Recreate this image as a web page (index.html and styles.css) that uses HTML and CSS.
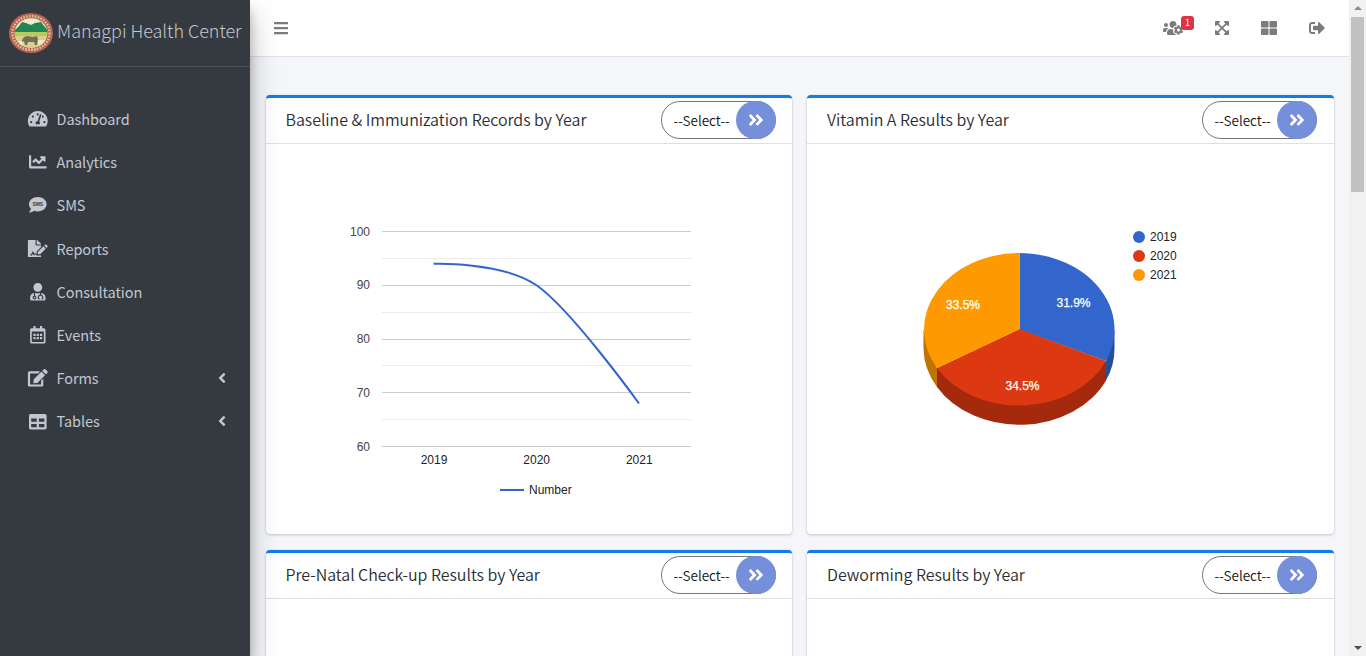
FILE: index.html
```html
<!DOCTYPE html>
<html lang="en">
<head>
<meta charset="utf-8">
<title>Managpi Health Center</title>
<link rel="stylesheet" href="styles.css">
</head>
<body>
<svg class="defs" width="0" height="0">
  <symbol id="i-double" viewBox="0 0 448 512"><path d="M224.3 273l-136 136c-9.4 9.4-24.6 9.4-33.9 0l-22.6-22.6c-9.4-9.4-9.4-24.6 0-33.9l96.4-96.4-96.4-96.4c-9.4-9.4-9.4-24.6 0-33.9L54.3 103c9.4-9.4 24.6-9.4 33.9 0l136 136c9.5 9.4 9.5 24.6.1 34zm192-34l-136-136c-9.4-9.4-24.6-9.4-33.9 0l-22.6 22.6c-9.4 9.4-9.4 24.6 0 33.9l96.4 96.4-96.4 96.4c-9.4 9.4-9.4 24.6 0 33.9l22.6 22.6c9.4 9.4 24.6 9.4 33.9 0l136-136c9.4-9.2 9.4-24.4 0-33.8z"/></symbol>
  <symbol id="i-left" viewBox="0 0 256 512"><path d="M31.7 239l136-136c9.4-9.4 24.6-9.4 33.9 0l22.6 22.6c9.4 9.4 9.4 24.6 0 33.9L127.9 256l96.4 96.4c9.4 9.4 9.4 24.6 0 33.9L201.7 409c-9.4 9.4-24.6 9.4-33.9 0l-136-136c-9.5-9.4-9.5-24.6-.1-34z"/></symbol>
</svg>
<div class="app">
  <aside class="sidebar">
    <div class="brand">
      <svg class="seal" viewBox="0 0 44 40">
        <defs><clipPath id="inner"><ellipse cx="22" cy="20" rx="16.3" ry="14.8"/></clipPath></defs>
        <ellipse cx="22" cy="20" rx="22" ry="20" fill="#b9634f"/>
        <ellipse cx="22" cy="20" rx="18.6" ry="16.9" fill="none" stroke="#dcc0a4" stroke-width="2.4" stroke-dasharray="1.6 1.3"/>
        <g clip-path="url(#inner)">
          <path fill="#f0ecc9" d="M0 0h44v40H0z"/>
          <path fill="#218653" d="M4 19l6-6 3-4 4 1 5 2 4-2 6-1 3 4 5 5v2H4z"/>
          <path fill="#b5cb5c" d="M4 19h36v4H4z"/>
          <path fill="#d9cf8e" d="M4 23h36v14H4z"/>
          <path fill="#efe9c0" d="M4 28h10v8H4zM29 27h10v5H29z"/>
          <path fill="#766e54" d="M13 27l2-3 3-1 6 1 4-1 1 3-1 6h-2l-1-3h-6l-1 3h-2l-1-4-2 1z"/>
        </g>
        <path d="M16 36.500h12" stroke="#dbb79f" stroke-width="2" stroke-dasharray="2 1"/>
      </svg>
      <span class="brand-name">Managpi Health Center</span>
    </div>
    <nav class="menu">
      <a class="item"><svg class="ico" viewBox="0 0 576 512"><path d="M288 32C128.94 32 0 160.94 0 320c0 52.8 14.25 102.26 39.06 144.8 5.61 9.62 16.3 15.2 27.44 15.2h443c11.14 0 21.83-5.58 27.44-15.2C561.75 422.26 576 372.8 576 320c0-159.06-128.94-288-288-288zm0 64c14.71 0 26.58 10.13 30.32 23.65-1.11 2.26-2.64 4.23-3.45 6.67l-9.22 27.67c-5.13 3.49-10.97 6.01-17.64 6.01-17.67 0-32-14.33-32-32S270.33 96 288 96zM96 384c-17.67 0-32-14.33-32-32s14.33-32 32-32 32 14.33 32 32-14.33 32-32 32zm48-160c-17.67 0-32-14.33-32-32s14.33-32 32-32 32 14.33 32 32-14.33 32-32 32zm246.77-72.41l-61.33 184C343.13 347.33 352 364.54 352 384c0 11.72-3.38 22.55-8.88 32H232.88c-5.5-9.45-8.88-20.28-8.88-32 0-33.94 26.5-61.43 59.9-63.59l61.34-184.01c4.17-12.56 17.73-19.45 30.36-15.17 12.57 4.19 19.35 17.79 15.17 30.36zm14.66 57.2l15.52-46.55c3.47-1.29 7.13-2.23 11.05-2.23 17.67 0 32 14.33 32 32s-14.33 32-32 32c-11.38-.01-20.89-6.28-26.57-15.22zM480 384c-17.67 0-32-14.33-32-32s14.33-32 32-32 32 14.33 32 32-14.33 32-32 32z"/></svg><span>Dashboard</span></a>
      <a class="item"><svg class="ico" viewBox="0 0 512 512"><path d="M496 384H64V80c0-8.84-7.16-16-16-16H16C7.16 64 0 71.16 0 80v336c0 17.67 14.33 32 32 32h464c8.84 0 16-7.16 16-16v-32c0-8.84-7.16-16-16-16zM464 96H345.94c-21.38 0-32.09 25.85-16.97 40.97l32.4 32.4L288 242.75l-73.37-73.37c-12.5-12.5-32.76-12.5-45.25 0l-68.69 68.69c-6.25 6.25-6.25 16.38 0 22.63l22.62 22.62c6.25 6.25 16.38 6.25 22.63 0L192 237.25l73.37 73.37c12.5 12.5 32.76 12.5 45.25 0l96-96 32.4 32.4c15.12 15.12 40.97 4.41 40.97-16.97V112c.01-8.84-7.15-16-15.99-16z"/></svg><span>Analytics</span></a>
      <a class="item"><svg class="ico" viewBox="0 0 512 512"><path d="M256 32C114.6 32 0 125.1 0 240c0 49.6 21.4 95 57 130.7C44.5 421.1 2.7 466 2.2 466.5c-2.2 2.3-2.8 5.7-1.5 8.7 1.3 3 4.1 4.8 7.3 4.8 66.3 0 116-31.8 140.6-51.4 32.7 12.3 69 19.4 107.4 19.4 141.4 0 256-93.1 256-208S397.4 32 256 32z"/><text class="bubble" x="256" y="292" text-anchor="middle" textLength="310" lengthAdjust="spacingAndGlyphs">SMS</text></svg><span>SMS</span></a>
      <a class="item"><svg class="ico" viewBox="0 0 576 512"><path d="M218.17 424.14c-2.95-5.92-8.09-6.52-10.17-6.52s-7.22.59-10.02 6.19l-7.67 15.34c-6.37 12.78-25.03 11.37-29.48-2.09L144 386.59l-10.61 31.88c-5.89 17.66-22.38 29.53-41 29.53H80c-8.84 0-16-7.16-16-16s7.16-16 16-16h12.39c4.83 0 9.11-3.08 10.64-7.66l18.19-54.64c3.3-9.81 12.44-16.41 22.78-16.41s19.48 6.59 22.77 16.41l13.88 41.64c19.75-16.19 54.06-9.7 66 14.16 1.89 3.78 5.49 5.95 9.36 6.26v-82.12l128-127.09V160H248c-13.2 0-24-10.8-24-24V0H24C10.7 0 0 10.7 0 24v464c0 13.3 10.7 24 24 24h336c13.3 0 24-10.7 24-24v-40l-128-.11c-16.12-.31-30.58-9.28-37.83-23.75zM384 121.9c0-6.3-2.5-12.4-7-16.9L279.1 7c-4.5-4.5-10.6-7-17-7H256v128h128v-6.1zm-96 225.06V416h68.99l161.68-162.78-67.88-67.88L288 346.96zm280.54-179.63l-31.87-31.87c-9.94-9.94-26.07-9.94-36.01 0l-27.25 27.25 67.88 67.88 27.25-27.25c9.95-9.94 9.95-26.07 0-36.01z"/></svg><span>Reports</span></a>
      <a class="item"><svg class="ico" viewBox="0 0 448 512"><path d="M224 256c70.7 0 128-57.3 128-128S294.7 0 224 0 96 57.3 96 128s57.3 128 128 128zM104 424c0 13.3 10.7 24 24 24s24-10.7 24-24-10.7-24-24-24-24 10.7-24 24zm216-135.4v49c36.5 7.4 64 39.8 64 78.4v41.7c0 7.6-5.4 14.2-12.9 15.7l-32.2 6.4c-4.3.9-8.5-1.9-9.4-6.3l-3.1-15.7c-.9-4.3 1.9-8.6 6.3-9.4l19.3-3.9V416c0-62.8-96-65.1-96 1.9v26.7l19.3 3.9c4.3.9 7.1 5.1 6.3 9.4l-3.1 15.7c-.9 4.3-5.1 7.1-9.4 6.3l-31.2-4.2c-7.9-1.1-13.8-7.8-13.8-15.9V416c0-38.6 27.5-70.9 64-78.4v-45.2c-2.2.7-4.4 1.1-6.6 1.9-18 6.3-37.3 9.8-57.4 9.8s-39.4-3.5-57.4-9.8c-7.4-2.6-14.9-4.2-22.6-5.2v81.6c23.1 6.9 40 28.1 40 53.4 0 30.9-25.1 56-56 56s-56-25.1-56-56c0-25.3 16.9-46.5 40-53.4v-80.4C48.5 301 0 355.8 0 422.4v44.8C0 491.9 20.1 512 44.8 512h358.4c24.7 0 44.8-20.1 44.8-44.8v-44.8c0-72-56.8-130.3-128-133.8z"/></svg><span>Consultation</span></a>
      <a class="item"><svg class="ico" viewBox="0 0 448 512"><path fill-rule="evenodd" d="M448 112v352c0 26.5-21.5 48-48 48H48c-26.5 0-48-21.5-48-48V112c0-26.5 21.5-48 48-48h48V12c0-6.6 5.4-12 12-12h40c6.6 0 12 5.4 12 12v52h128V12c0-6.6 5.4-12 12-12h40c6.6 0 12 5.4 12 12v52h48c26.5 0 48 21.5 48 48zm-48 346V160H48v298c0 3.3 2.7 6 6 6h340c3.3 0 6-2.7 6-6z"/><path d="M96 224h64v64H96zm96 0h64v64h-64zm96 0h64v64h-64zM96 320h64v64H96zm96 0h64v64h-64zm96 0h64v64h-64z"/></svg><span>Events</span></a>
      <a class="item"><svg class="ico" viewBox="0 0 576 512"><path d="M402.6 83.2l90.2 90.2c3.8 3.8 3.8 10 0 13.8L274.4 405.6l-92.8 10.3c-12.4 1.4-22.9-9.1-21.5-21.5l10.3-92.8L388.8 83.2c3.8-3.8 10-3.8 13.8 0zm162-22.9l-48.8-48.8c-15.2-15.2-39.9-15.2-55.2 0l-35.4 35.4c-3.8 3.8-3.8 10 0 13.8l90.2 90.2c3.8 3.8 10 3.8 13.8 0l35.4-35.4c15.2-15.3 15.2-40 0-55.2zM384 346.2V448H64V128h229.8c3.2 0 6.2-1.3 8.5-3.5l40-40c7.6-7.6 2.2-20.5-8.5-20.5H48C21.5 64 0 85.5 0 112v352c0 26.5 21.5 48 48 48h352c26.5 0 48-21.5 48-48V306.2c0-10.7-12.9-16-20.5-8.5l-40 40c-2.2 2.3-3.5 5.3-3.5 8.5z"/></svg><span>Forms</span><svg class="arrow"><use href="#i-left"/></svg></a>
      <a class="item"><svg class="ico" viewBox="0 0 512 512"><path d="M464 32H48C21.49 32 0 53.49 0 80v352c0 26.51 21.49 48 48 48h416c26.51 0 48-21.49 48-48V80c0-26.51-21.49-48-48-48zM224 416H64v-96h160v96zm0-160H64v-96h160v96zm224 160H288v-96h160v96zm0-160H288v-96h160v96z"/></svg><span>Tables</span><svg class="arrow"><use href="#i-left"/></svg></a>
    </nav>
  </aside>
  <div class="page">
    <header class="topbar">
      <svg class="bars" viewBox="0 0 448 512"><path d="M16 60h416q16 0 16 16v40q0 16-16 16H16q-16 0-16-16V76q0-16 16-16zm0 160h416q16 0 16 16v40q0 16-16 16H16q-16 0-16-16v-40q0-16 16-16zm0 160h416q16 0 16 16v40q0 16-16 16H16q-16 0-16-16v-40q0-16 16-16z"/></svg>
      <div class="tools">
        <div class="users">
          <svg width="20" height="16" viewBox="0 0 640 512"><path d="M610.5 341.3c2.6-14.1 2.6-28.5 0-42.6l25.8-14.9c3-1.7 4.3-5.2 3.3-8.5-6.7-21.6-18.2-41.2-33.2-57.4-2.3-2.5-6-3.1-9-1.4l-25.8 14.9c-10.9-9.3-23.4-16.5-36.9-21.3v-29.8c0-3.4-2.4-6.4-5.7-7.1-22.3-5-45-4.8-66.2 0-3.3.7-5.7 3.7-5.7 7.1v29.8c-13.5 4.8-26 12-36.9 21.3l-25.8-14.9c-2.9-1.7-6.7-1.1-9 1.4-15 16.2-26.5 35.8-33.2 57.4-1 3.3.4 6.8 3.3 8.5l25.8 14.9c-2.6 14.1-2.6 28.5 0 42.6l-25.8 14.9c-3 1.7-4.3 5.2-3.3 8.5 6.7 21.6 18.2 41.1 33.2 57.4 2.3 2.5 6 3.1 9 1.4l25.8-14.9c10.9 9.3 23.4 16.5 36.9 21.3v29.8c0 3.4 2.4 6.4 5.7 7.1 22.3 5 45 4.8 66.2 0 3.3-.7 5.7-3.7 5.7-7.1v-29.8c13.5-4.8 26-12 36.9-21.3l25.8 14.9c2.9 1.7 6.7 1.1 9-1.4 15-16.2 26.5-35.8 33.2-57.4 1-3.3-.4-6.8-3.3-8.5l-25.8-14.9zM496 368.5c-26.8 0-48.5-21.8-48.5-48.5s21.8-48.5 48.5-48.5 48.5 21.8 48.5 48.5-21.7 48.5-48.5 48.5zM96 224c35.3 0 64-28.7 64-64s-28.7-64-64-64-64 28.7-64 64 28.7 64 64 64zm224 32c1.9 0 3.7-.5 5.6-.6 8.3-21.7 20.5-42.1 36.3-59.2 7.4-8 17.9-12.6 28.9-12.6 6.9 0 13.7 1.8 19.6 5.3l7.9 4.6c.8-.5 1.6-.9 2.4-1.4 7-14.6 11.2-30.8 11.2-48 0-61.9-50.1-112-112-112S208 82.1 208 144c0 61.9 50.1 112 112 112zm105.2 194.5c-2.3-1.2-4.6-2.6-6.8-3.9-8.2 4.8-15.3 9.8-27.5 9.8-10.9 0-21.4-4.6-28.9-12.6-18.3-19.8-32.3-43.9-40.2-69.6-10.7-34.5 24.9-49.7 25.8-50.3-.1-2.6-.1-5.2 0-7.8l-7.9-4.6c-3.8-2.2-7-5-9.8-8.1-3.3.2-6.5.6-9.8.6-24.6 0-47.6-6-68.5-16h-8.3C179.6 288 128 339.6 128 403.2V432c0 26.5 21.5 48 48 48h255.4c-3.7-6-6.2-12.8-6.2-20.3v-9.2zM173.1 274.6C161.5 263.1 145.6 256 128 256H64c-35.3 0-64 28.7-64 64v32c0 17.7 14.3 32 32 32h65.9c6.3-47.4 34.9-87.3 75.2-109.4z"/></svg>
          <span class="badge">1</span>
        </div>
        <svg width="14" height="16" viewBox="0 0 448 512"><path d="M448 344v112a23.94 23.94 0 0 1-24 24H312c-21.39 0-32.09-25.9-17-41l36.2-36.2L224 295.6 116.77 402.9 153 439c15.09 15.1 4.39 41-17 41H24a23.94 23.94 0 0 1-24-24V344c0-21.4 25.89-32.1 41-17l36.19 36.2L184.46 256 77.18 148.7 41 185c-15.1 15.1-41 4.4-41-17V56a23.94 23.94 0 0 1 24-24h112c21.39 0 32.09 25.9 17 41l-36.2 36.2L224 216.4l107.23-107.3L295 73c-15.09-15.1-4.39-41 17-41h112a23.94 23.94 0 0 1 24 24v112c0 21.4-25.89 32.1-41 17l-36.19-36.2L263.54 256l107.28 107.3L407 327.1c15.1-15.2 41-4.5 41 16.9z"/></svg>
        <svg width="16" height="16" viewBox="0 0 512 512"><rect y="32" width="240" height="208" rx="24"/><rect x="272" y="32" width="240" height="208" rx="24"/><rect y="272" width="240" height="208" rx="24"/><rect x="272" y="272" width="240" height="208" rx="24"/></svg>
        <svg width="16" height="16" viewBox="0 0 512 512"><path d="M497 273L329 441c-15 15-41 4.5-41-17v-96H152c-13.3 0-24-10.7-24-24v-96c0-13.3 10.7-24 24-24h136V88c0-21.4 25.9-32 41-17l168 168c9.3 9.4 9.3 24.6 0 34zM192 436v-40c0-6.6-5.4-12-12-12H96c-17.7 0-32-14.3-32-32V160c0-17.7 14.3-32 32-32h84c6.6 0 12-5.4 12-12V76c0-6.6-5.4-12-12-12H96c-53 0-96 43-96 96v192c0 53 43 96 96 96h84c6.6 0 12-5.4 12-12z"/></svg>
      </div>
    </header>
    <main class="grid">
      <section class="card">
        <div class="card-head"><h3>Baseline &amp; Immunization Records by Year</h3><div class="picker"><span>--Select--</span><b class="go"><svg><use href="#i-double"/></svg></b></div></div>
        <svg class="chart" width="526" height="391" viewBox="266 144 526 391">
          <g class="major"><path d="M382 231.500h309M382 285.500h309M382 339.500h309M382 392.500h309M382 446.500h309"/></g>
          <g class="minor"><path d="M382 258.500h309M382 312.500h309M382 365.500h309M382 419.500h309"/></g>
          <path class="line" d="M433.500 263.800C433.500 263.800 502.200 261.600 536.500 285.300C570.800 308.900 639 403.500 639 403.500"/>
          <g class="ylab" text-anchor="end"><text x="370" y="236">100</text><text x="370" y="289">90</text><text x="370" y="343">80</text><text x="370" y="397">70</text><text x="370" y="451">60</text></g>
          <g class="xlab" text-anchor="middle"><text x="434" y="464">2019</text><text x="536.700" y="464">2020</text><text x="639.300" y="464">2021</text></g>
          <path class="line" d="M500 490h24"/>
          <text class="xlab" x="529" y="494">Number</text>
        </svg>
      </section>
      <section class="card">
        <div class="card-head"><h3>Vitamin A Results by Year</h3><div class="picker"><span>--Select--</span><b class="go"><svg><use href="#i-double"/></svg></b></div></div>
        <svg class="chart" width="527" height="391" viewBox="807 144 527 391">
          <path fill="#264d99" d="M1114.500 329.500v19A95.500 76.500 0 0 1 1106 380.500v-19z"/>
          <path fill="#bf7300" d="M923.500 329.500v19A95.500 76.500 0 0 0 937 387v-19z"/>
          <path fill="#a52a0d" d="M937 368v19A95.500 76.500 0 0 0 1106 380.500v-19z"/>
          <path fill="#3366cc" d="M1019.500 329.500V253A95.500 76.500 0 0 1 1106 361z"/>
          <path fill="#dc3912" d="M1019.500 329L1106 361A95.500 76.500 0 0 1 937 368z"/>
          <path fill="#ff9900" d="M1019.500 329L937 368A95.500 76.500 0 0 1 1019.500 253z"/>
          <g class="pct" text-anchor="middle"><text x="1073.500" y="307">31.9%</text><text x="1022.500" y="390">34.5%</text><text x="963" y="309">33.5%</text></g>
          <circle cx="1139" cy="237" r="6" fill="#3366cc"/><circle cx="1139" cy="256" r="6" fill="#dc3912"/><circle cx="1139" cy="275" r="6" fill="#ff9900"/>
          <g class="xlab"><text x="1150" y="241">2019</text><text x="1150" y="260">2020</text><text x="1150" y="279">2021</text></g>
        </svg>
      </section>
      <section class="card cut">
        <div class="card-head"><h3>Pre-Natal Check-up Results by Year</h3><div class="picker"><span>--Select--</span><b class="go"><svg><use href="#i-double"/></svg></b></div></div>
      </section>
      <section class="card cut">
        <div class="card-head"><h3>Deworming Results by Year</h3><div class="picker"><span>--Select--</span><b class="go"><svg><use href="#i-double"/></svg></b></div></div>
      </section>
    </main>
  </div>
  <div class="scroll">
    <i class="up"></i><i class="thumb"></i><i class="down"></i>
  </div>
</div>
</body>
</html>
```
FILE: styles.css
```css
* { box-sizing: border-box; }
body {
  margin: 0;
  height: 656px;
  overflow: hidden;
  font-family: "Noto Sans CJK SC", sans-serif;
  font-size: 14.5px;
  color: #212529;
}
svg { fill: currentColor; flex: none; }
.defs { display: block; width: 0; height: 0; }
.app { display: flex; height: 656px; background: #f4f6f9; }

.sidebar {
  width: 250px;
  flex: none;
  height: 656px;
  background: #343a40;
  color: #c2c7d0;
  position: relative;
  z-index: 2;
  box-shadow: 0 14px 28px rgba(0,0,0,.25), 0 10px 10px rgba(0,0,0,.22);
}
.brand {
  height: 67px;
  border-bottom: 1px solid #4b545c;
  display: flex;
  align-items: center;
  padding-left: 9px;
  gap: 4px;
}
.seal { width: 44px; height: 40px; }
.brand-name { font-size: 18px; font-weight: 300; letter-spacing: -0.04px; white-space: nowrap; line-height: 30px; padding-bottom: 7px; }
.menu { padding-top: 31px; display: flex; flex-direction: column; }
.item { height: 43.2px; display: flex; align-items: center; padding: 0 24px 0 25px; }
.item:nth-child(n+4) { padding-top: 1px; }
.item span { line-height: 24px; padding-bottom: 2px; letter-spacing: -0.1px; font-weight: 400; }
.ico { width: 25.6px; height: 17.6px; margin-right: 6px; margin-top: -2px; padding: 0 2.4px; }
.bubble { font: bold 160px "Liberation Sans", sans-serif; fill: #343a40; }
.arrow { width: 8px; height: 16px; margin-left: auto; margin-top: -2px; }

.page { flex: 1; min-width: 0; }
.topbar {
  height: 57px;
  background: #fff;
  border-bottom: 1px solid #dee2e6;
  display: flex;
  justify-content: space-between;
  align-items: center;
  padding: 0 24px;
  color: #7b7b7b;
}
.bars { width: 14px; height: 16px; }
.tools { display: flex; align-items: center; }
.tools > svg { margin-left: 32px; }
.users { position: relative; width: 20px; height: 16px; }
.users svg { display: block; }
.badge {
  position: absolute;
  left: 18px;
  top: -4px;
  width: 13px;
  height: 14px;
  border-radius: 3px;
  background: #dc3545;
  color: #fff;
  font-size: 9px;
  line-height: 13px;
  text-align: center;
}

.grid {
  display: grid;
  grid-template-columns: 526px 527px;
  grid-template-rows: 439px 106px;
  column-gap: 15px;
  row-gap: 16px;
  padding: 38px 0 0 16px;
}
.card {
  background: #fff;
  border-top: 3px solid #147bec;
  border-radius: 4px;
  box-shadow: 0 0 1px rgba(0,0,0,.125), 0 1px 3px rgba(0,0,0,.2);
}
.cut { border-bottom-left-radius: 0; border-bottom-right-radius: 0; }
.card-head {
  height: 46px;
  border-bottom: 1px solid #dfdfdf;
  display: flex;
  justify-content: space-between;
  align-items: flex-start;
  padding: 3px 16px 0 19.5px;
}
.card:nth-child(even) .card-head { padding-left: 20px; padding-right: 17px; }
.card-head h3 { margin: 6px 0 0; font-size: 16px; font-weight: 350; line-height: 24px; white-space: nowrap; letter-spacing: -0.04px; color: #2a2e32; }
.picker {
  width: 115.5px;
  height: 38px;
  border: 1px solid #777;
  border-radius: 19px;
  display: flex;
  align-items: center;
  justify-content: space-between;
  padding-left: 12px;
  color: #111;
}
.picker span { font-size: 13.5px; font-weight: 350; white-space: nowrap; line-height: 20px; }
.go {
  width: 40px;
  height: 38px;
  margin-right: -1px;
  border-radius: 20px;
  background: #768fdb;
  color: #fff;
  display: flex;
  align-items: center;
  justify-content: center;
}
.go svg { width: 16px; height: 18px; margin-left: -1px; }
.chart { display: block; font: 12px "Liberation Sans", Arial, sans-serif; }
.major path { stroke: #ccc; fill: none; }
.minor path { stroke: #ebebeb; fill: none; }
.line { stroke: #3366cc; stroke-width: 2; fill: none; }
.ylab { fill: #444; }
.xlab { fill: #222; }
.pct { fill: #fff; stroke: #fff; stroke-width: .25px; }

.scroll {
  width: 17px;
  background: #f1f1f1;
  display: flex;
  flex-direction: column;
  align-items: center;
}
.up { margin-top: 6px; border: 4px solid transparent; border-top: 0; border-bottom: 4px solid #8b8b8b; }
.thumb { width: 13px; height: 175px; margin-top: 7px; background: #c1c1c1; }
.down { margin-top: auto; margin-bottom: 6px; border: 4px solid transparent; border-bottom: 0; border-top: 4px solid #505050; }
```
